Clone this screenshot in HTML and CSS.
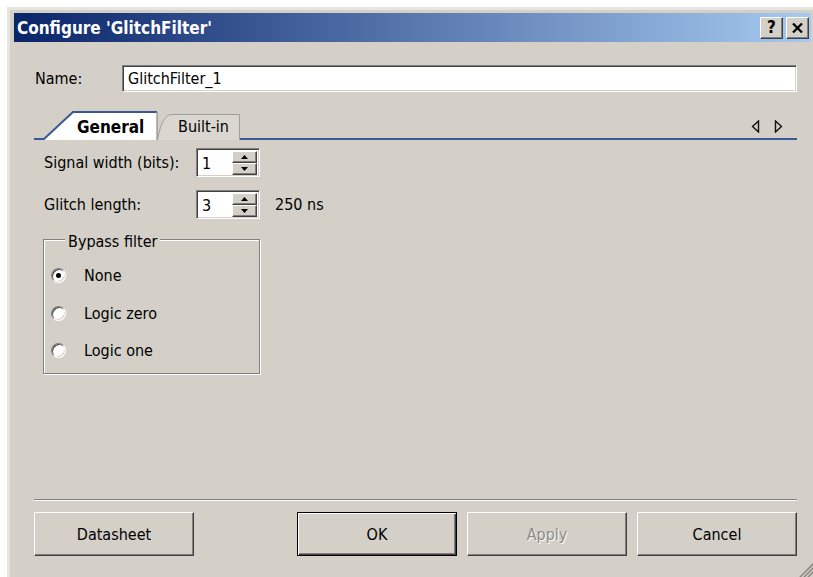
FILE: index.html
```html
<!DOCTYPE html>
<html>
<head>
<meta charset="utf-8">
<title>Configure 'GlitchFilter'</title>
<link rel="stylesheet" href="styles.css">
</head>
<body>
<div class="window">
  <div class="titlebar">
    <span class="title">Configure 'GlitchFilter'</span>
    <div class="caption-buttons">
      <button class="cap-btn help">?</button>
      <button class="cap-btn close">
        <svg width="11" height="10" viewBox="0 0 11 10"><path d="M1 0.5 L10 9.5 M10 0.5 L1 9.5" stroke="#000" stroke-width="2.2" fill="none"/></svg>
      </button>
    </div>
  </div>

  <div class="client">
    <div class="name-row">
      <label class="name-label">Name:</label>
      <div class="field">GlitchFilter_1</div>
    </div>

    <div class="tabstrip">
      <div class="tab tab-active">
        <svg class="tab-shape" width="124" height="29" viewBox="0 0 124 29">
          <polygon points="10,29 39,1 123,1 123,29" fill="#fff"/>
          <path d="M0 28 H10 L39 1 H123" stroke="#3a5796" stroke-width="2" fill="none"/>
          <path d="M123 1 V29" stroke="#8c8a86" stroke-width="1.2" fill="none"/>
        </svg>
        <span class="tab-text">General</span>
      </div>
      <div class="tab tab-idle">
        <svg class="tab-shape" width="84" height="27" viewBox="0 0 84 27">
          <path d="M0.5 27 C3 13 7 1.5 15 1.5 H82.5 V27 Z" fill="#dad7d0"/>
          <path d="M0.5 27 C3 13 7 1.5 15 1.5 H82.5 V27" stroke="#a19e98" stroke-width="1" fill="none"/>
        </svg>
        <span class="tab-text">Built-in</span>
      </div>
      <div class="tab-fill">
        <div class="scroll-arrows">
          <svg width="9" height="13" viewBox="0 0 9 13"><polygon points="7.5,1 1.5,6.5 7.5,12" fill="none" stroke="#111" stroke-width="1.4"/></svg>
          <svg width="9" height="13" viewBox="0 0 9 13"><polygon points="1.5,1 7.5,6.5 1.5,12" fill="none" stroke="#111" stroke-width="1.4"/></svg>
        </div>
      </div>
    </div>

    <div class="page">
      <div class="row">
        <span class="row-label">Signal width (bits):</span>
        <div class="spin">
          <span class="spin-value">1</span>
          <div class="spin-buttons">
            <span class="spin-btn"><svg width="7" height="4" viewBox="0 0 7 4"><polygon points="3.5,0 7,4 0,4" fill="#000"/></svg></span>
            <span class="spin-btn"><svg width="7" height="4" viewBox="0 0 7 4"><polygon points="0,0 7,0 3.5,4" fill="#000"/></svg></span>
          </div>
        </div>
      </div>
      <div class="row row-second">
        <span class="row-label">Glitch length:</span>
        <div class="spin">
          <span class="spin-value">3</span>
          <div class="spin-buttons">
            <span class="spin-btn"><svg width="7" height="4" viewBox="0 0 7 4"><polygon points="3.5,0 7,4 0,4" fill="#000"/></svg></span>
            <span class="spin-btn"><svg width="7" height="4" viewBox="0 0 7 4"><polygon points="0,0 7,0 3.5,4" fill="#000"/></svg></span>
          </div>
        </div>
        <span class="unit">250 ns</span>
      </div>

      <fieldset class="group">
        <legend>Bypass filter</legend>
        <div class="radio-row"><span class="radio checked"></span>None</div>
        <div class="radio-row"><span class="radio"></span>Logic zero</div>
        <div class="radio-row"><span class="radio"></span>Logic one</div>
      </fieldset>
    </div>

    <div class="footer">
      <div class="separator"></div>
      <div class="buttons">
        <button class="btn">Datasheet</button>
        <span class="spacer"></span>
        <button class="btn btn-default">OK</button>
        <button class="btn btn-disabled">Apply</button>
        <button class="btn">Cancel</button>
      </div>
    </div>
  </div>

  <svg class="grip" width="17" height="17" viewBox="0 0 17 17">
    <path d="M16 3 L3 16 M16 7 L7 16 M16 11 L11 16" stroke="#fff" stroke-width="1" fill="none"/>
    <path d="M17 3 L3 17 M17 7 L7 17 M17 11 L11 17" stroke="#8a877f" stroke-width="1.6" fill="none"/>
  </svg>
</div>
</body>
</html>
```

FILE: styles.css
```css
html, body {
  margin: 0;
  height: 100%;
  overflow: hidden;
  background: #fff;
}

body {
  box-sizing: border-box;
  padding: 7px 0 0 7px;
  font-family: "DejaVu Sans Condensed", "DejaVu Sans", sans-serif;
  font-size: 16px;
  color: #000;
}

button {
  font: inherit;
  color: inherit;
}

/* dialog frame */
.window {
  position: relative;
  box-sizing: border-box;
  width: 808px;
  height: 570px;
  border-top: 3px solid #e7e5e0;
  border-left: 3px solid #e7e5e0;
  padding: 3px 4px 0 4px;
  background: #d4d0c8;
  display: flex;
  flex-direction: column;
}

/* caption */
.titlebar {
  height: 29px;
  flex: none;
  display: flex;
  align-items: center;
  padding: 0 2px 0 3px;
  background: linear-gradient(to right, #0a246a 0%, #a6caf0 100%);
}

.title {
  color: #fff;
  font-weight: bold;
  font-size: 17px;
}

.caption-buttons {
  margin-left: auto;
  display: flex;
  gap: 3px;
}

.cap-btn {
  box-sizing: border-box;
  width: 23px;
  height: 22px;
  padding: 0;
  background: #d4d0c8;
  border: 1px solid;
  border-color: #fff #404040 #404040 #fff;
  box-shadow: inset -1px -1px 0 #808080;
  display: flex;
  align-items: center;
  justify-content: center;
  font-weight: bold;
  font-size: 17px;
  line-height: 1;
}

/* client area */
.client {
  flex: 1;
  display: flex;
  flex-direction: column;
  padding: 0 14px 0 20px;
}

.name-row {
  margin-top: 23px;
  height: 27px;
  display: flex;
  align-items: center;
}

.name-label {
  width: 87px;
  padding-left: 1px;
}

.field {
  flex: 1;
  box-sizing: border-box;
  height: 27px;
  background: #fff;
  border: 1px solid;
  border-color: #808080 #fff #fff #808080;
  box-shadow: inset 1px 1px 0 #404040, inset -1px -1px 0 #d4d0c8;
  padding-left: 5px;
  line-height: 25px;
}

/* tabs */
.tabstrip {
  margin-top: 19px;
  height: 29px;
  display: flex;
  align-items: flex-end;
}

.tab {
  position: relative;
  display: flex;
  align-items: center;
}

.tab-shape {
  position: absolute;
  left: 0;
  top: 0;
}

.tab-text {
  position: relative;
}

.tab-active {
  width: 123px;
  height: 29px;
}

.tab-active .tab-text {
  padding: 2px 0 0 43px;
  font-weight: bold;
  font-size: 17px;
}

.tab-idle {
  box-sizing: border-box;
  width: 83px;
  height: 27px;
  border-bottom: 2px solid #3a5796;
}

.tab-idle .tab-text {
  padding: 2px 0 0 21px;
}

.tab-fill {
  flex: 1;
  box-sizing: border-box;
  height: 29px;
  border-bottom: 2px solid #3a5796;
  display: flex;
  align-items: center;
  justify-content: flex-end;
  padding-right: 14px;
}

.scroll-arrows {
  display: flex;
  gap: 14px;
  margin-top: 4px;
}

.scroll-arrows svg {
  display: block;
}

/* page content */
.page {
  display: flex;
  flex-direction: column;
  padding-left: 10px;
  margin-top: 8px;
}

.row {
  height: 28px;
  display: flex;
  align-items: center;
}

.row-second {
  margin-top: 14px;
}

.row-label {
  width: 152px;
}

.spin {
  box-sizing: border-box;
  width: 64px;
  height: 29px;
  display: flex;
  background: #fff;
  border: 1px solid;
  border-color: #808080 #fff #fff #808080;
  box-shadow: inset 1px 1px 0 #404040, inset -1px -1px 0 #d4d0c8;
  padding: 2px 2px 1px 2px;
}

.spin-value {
  flex: 1;
  padding-left: 3px;
  line-height: 25px;
}

.spin-buttons {
  width: 25px;
  display: flex;
  flex-direction: column;
}

.spin-btn {
  flex: 1;
  box-sizing: border-box;
  background: #d4d0c8;
  border: 1px solid;
  border-color: #fff #404040 #404040 #fff;
  box-shadow: inset -1px -1px 0 #808080;
  display: flex;
  align-items: center;
  justify-content: center;
}

.spin-btn svg {
  display: block;
}

.unit {
  margin-left: 15px;
}

/* bypass group */
.group {
  box-sizing: border-box;
  width: 217px;
  margin: 12px 0 0 -1px;
  padding: 8px 0 3px 7px;
  border: 1px solid #808080;
  box-shadow: 1px 1px 0 #fff, inset 1px 1px 0 #fff;
  min-width: 0;
}

.group legend {
  margin-left: 14px;
  padding: 0 3px;
  line-height: 19px;
  background: #d4d0c8;
  position: relative;
  top: 2px;
}

.radio-row {
  height: 37.5px;
  display: flex;
  align-items: center;
}

.radio {
  box-sizing: border-box;
  width: 15px;
  height: 15px;
  margin-right: 18px;
  border-radius: 50%;
  background: #fff;
  border: 1px solid;
  border-color: #808080 #fff #fff #808080;
  box-shadow: inset 1px 1px 0 #404040, inset -1px -1px 0 #d4d0c8;
  display: flex;
  align-items: center;
  justify-content: center;
}

.radio.checked::after {
  content: "";
  width: 5px;
  height: 5px;
  border-radius: 50%;
  background: #000;
}

/* footer */
.footer {
  margin-top: auto;
  padding-bottom: 21px;
}

.separator {
  height: 0;
  border-top: 1px solid #808080;
  border-bottom: 1px solid #fff;
}

.buttons {
  margin-top: 11px;
  display: flex;
  gap: 10px;
}

.spacer {
  flex: 1;
}

.btn {
  box-sizing: border-box;
  width: 160px;
  height: 44px;
  background: #d4d0c8;
  border: 1px solid;
  border-color: #fff #404040 #404040 #fff;
  box-shadow: inset -1px -1px 0 #808080;
  padding: 0;
}

.btn-default {
  border: 1px solid #000;
  box-shadow: inset 1px 1px 0 #fff, inset -1px -1px 0 #404040, inset -2px -2px 0 #808080;
}

.btn-disabled {
  color: #8d8a84;
  text-shadow: 1px 1px 0 #fff;
}

.grip {
  position: absolute;
  right: 1px;
  bottom: 0;
}
```
